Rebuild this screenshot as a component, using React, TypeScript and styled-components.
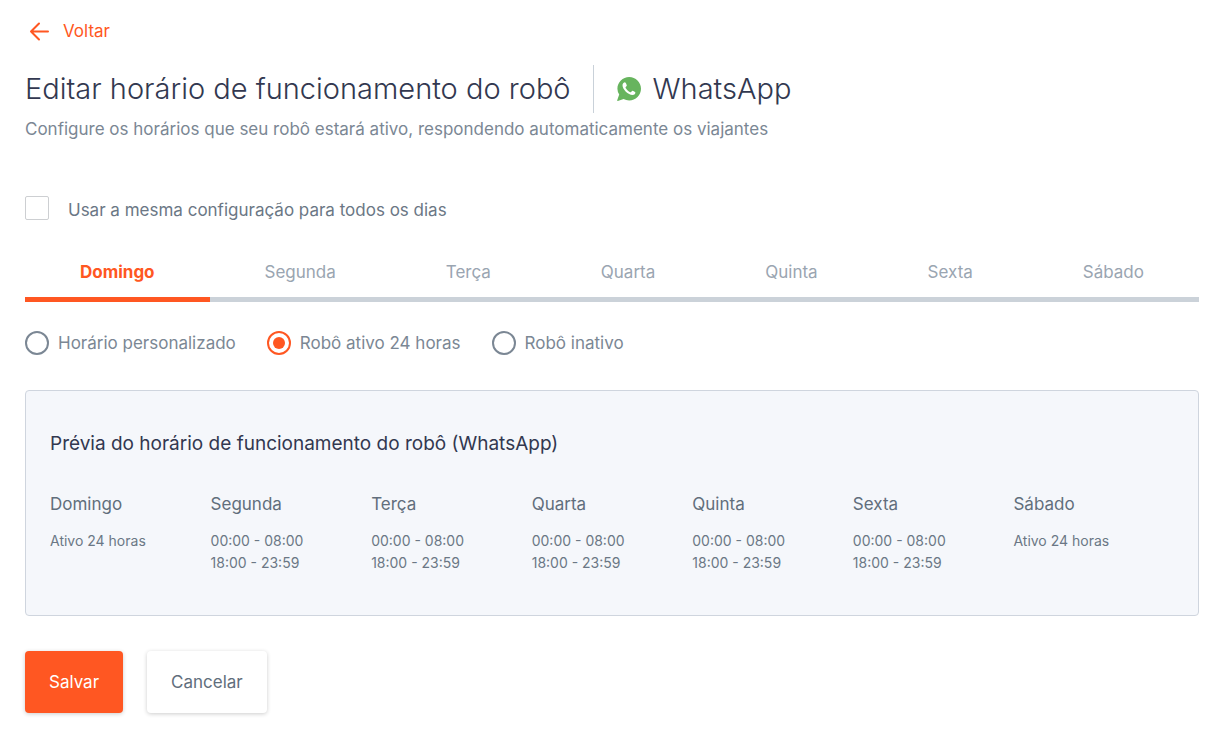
import React, { useState } from 'react';
import styled, { createGlobalStyle } from 'styled-components';

const GlobalStyle = createGlobalStyle`
  *, *::before, *::after { box-sizing: border-box; }
  body {
    margin: 0;
    background: #fff;
    color: #7b8794;
    font-family: Inter, "Liberation Sans", sans-serif;
    font-size: 17px;
    line-height: 24px;
  }
  h1, h2, h3, p, ul, fieldset { margin: 0; padding: 0; border: 0; font-weight: 400; }
  button, input { font: inherit; margin: 0; }
`;

const Page = styled.main`
  padding: 19px 23px 21px 25px;
`;

const BackLink = styled.a`
  display: inline-flex;
  align-items: center;
  gap: 11px;
  padding-left: 2px;
  color: #ff5722;
  text-decoration: none;
`;

const Header = styled.header`
  display: flex;
  flex-direction: column;
  gap: 4px;
  margin-top: 16px;
`;

const TitleRow = styled.div`
  display: flex;
  align-items: center;
  height: 48px;
  color: #323850;
  font-size: 29px;
  font-weight: 300;
  line-height: 48px;
`;

const Title = styled.h1`
  font-size: 29px;
  font-weight: 300;
  padding-right: 22px;
`;

const Channel = styled.div`
  display: flex;
  align-items: center;
  align-self: stretch;
  gap: 12px;
  padding-left: 23px;
  border-left: 1px solid #c9d1d9;
`;

const CheckLabel = styled.label`
  display: flex;
  align-items: flex-end;
  gap: 19px;
  margin-top: 55px;
  color: #6b7785;
  line-height: 20px;
`;

const Checkbox = styled.input`
  appearance: none;
  width: 24px;
  height: 24px;
  border: 1px solid #cdcfd2;
  border-radius: 2px;
  background: #fff;

  &:checked { background: #ff5722; }
`;

const TabList = styled.div`
  display: flex;
  margin-top: 28px;
`;

const Tab = styled.button<{ $active: boolean }>`
  flex: 1 1 auto;
  padding: 12px 0 13px;
  border: 0;
  border-bottom: 5px solid ${(p) => (p.$active ? '#ff5722' : '#cbd2d9')};
  background: none;
  color: ${(p) => (p.$active ? '#ff5722' : '#9aa5b1')};
  font-weight: ${(p) => (p.$active ? 700 : 400)};
`;

const RadioGroup = styled.fieldset`
  display: flex;
  gap: 31px;
  margin-top: 29px;
`;

const RadioLabel = styled.label`
  display: flex;
  align-items: center;
  gap: 9px;
`;

const Radio = styled.input`
  appearance: none;
  display: grid;
  place-items: center;
  width: 24px;
  height: 24px;
  border: 2px solid #7b8794;
  border-radius: 50%;

  &:checked { border-color: #ff5722; }
  &:checked::before {
    content: "";
    width: 12px;
    height: 12px;
    border-radius: 50%;
    background: #ff5722;
  }
`;

const Preview = styled.section`
  margin-top: 35px;
  padding: 41px 24px;
  border: 1px solid #cfd5de;
  border-radius: 4px;
  background: #f5f7fb;
`;

const PreviewTitle = styled.h2`
  color: #323850;
  font-size: 19px;
  line-height: 24px;
`;

const Days = styled.div`
  display: grid;
  grid-template-columns: repeat(7, 1fr);
  margin-top: 36px;
`;

const DayName = styled.h3`
  color: #616e7c;
  font-size: 17px;
`;

const Hours = styled.p`
  margin-top: 14px;
  color: #6b7785;
  font-size: 14px;
  line-height: 22px;
  white-space: pre-line;
`;

const Actions = styled.div`
  display: flex;
  gap: 24px;
  margin-top: 35px;
`;

const Button = styled.button<{ $primary?: boolean }>`
  padding: 19px 24px;
  border: 0;
  border-radius: 4px;
  background: ${(p) => (p.$primary ? '#ff5722' : '#fff')};
  color: ${(p) => (p.$primary ? '#fff' : '#616e7c')};
  box-shadow: 0 1px 4px rgba(0, 0, 0, 0.2);
`;

const split = '00:00 - 08:00\n18:00 - 23:59';
const schedule = [
  { day: 'Domingo', hours: 'Ativo 24 horas' },
  { day: 'Segunda', hours: split },
  { day: 'Terça', hours: split },
  { day: 'Quarta', hours: split },
  { day: 'Quinta', hours: split },
  { day: 'Sexta', hours: split },
  { day: 'Sábado', hours: 'Ativo 24 horas' },
];
const modes = ['Horário personalizado', 'Robô ativo 24 horas', 'Robô inativo'];

const WhatsAppIcon = () => (
  <svg width="24" height="24" viewBox="0 0 24 24" aria-hidden="true">
    <path
      fill="#67b45e"
      d="M12.2 0C18.7 0 24 5.2 24 11.7s-5.3 11.7-11.8 11.7c-2 0-3.900-.5-5.600-1.400L.8 23.900c-.4.100-.7-.200-.6-.6l2-5.700A11.600 11.600 0 0 1 .4 11.700C.4 5.200 5.700 0 12.200 0Z"
    />
    <path
      fill="#fff"
      d="M8.300 5.400C7.500 5 5.600 6.300 5.500 8.100c-.1 4.400 5.700 10 10.100 10 1.800-.1 3-1.600 2.800-2.600-.1-.6-2.200-1.600-2.800-1.700-.7-.1-1.300 1.300-1.900 1.400-1.400-.1-4.800-3.300-5.200-4.800 0-.7 1.400-1.300 1.300-2-.1-.7-1-2.800-1.500-3Z"
    />
  </svg>
);

export default function App() {
  const [day, setDay] = useState('Domingo');
  const [mode, setMode] = useState(modes[1]);

  return (
    <Page>
      <GlobalStyle />
      <BackLink href="#voltar">
        <svg width="25" height="24" viewBox="0 0 25 24" fill="none" stroke="currentColor" strokeWidth="2" strokeLinecap="round" strokeLinejoin="round" aria-hidden="true">
          <path d="M21 12.5H4M12 4.5l-8 8 8 8" />
        </svg>
        Voltar
      </BackLink>
      <Header>
        <TitleRow>
          <Title>Editar horário de funcionamento do robô</Title>
          <Channel>
            <WhatsAppIcon />
            WhatsApp
          </Channel>
        </TitleRow>
        <p>Configure os horários que seu robô estará ativo, respondendo automaticamente os viajantes</p>
      </Header>
      <CheckLabel>
        <Checkbox type="checkbox" />
        Usar a mesma configuração para todos os dias
      </CheckLabel>
      <TabList role="tablist">
        {schedule.map((s) => (
          <Tab key={s.day} type="button" role="tab" aria-selected={s.day === day} $active={s.day === day} onClick={() => setDay(s.day)}>
            {s.day}
          </Tab>
        ))}
      </TabList>
      <RadioGroup aria-label="Funcionamento">
        {modes.map((m) => (
          <RadioLabel key={m}>
            <Radio type="radio" name="mode" checked={m === mode} onChange={() => setMode(m)} />
            {m}
          </RadioLabel>
        ))}
      </RadioGroup>
      <Preview>
        <PreviewTitle>Prévia do horário de funcionamento do robô (WhatsApp)</PreviewTitle>
        <Days>
          {schedule.map((s) => (
            <div key={s.day}>
              <DayName>{s.day}</DayName>
              <Hours>{s.hours}</Hours>
            </div>
          ))}
        </Days>
      </Preview>
      <Actions>
        <Button type="button" $primary>Salvar</Button>
        <Button type="button">Cancelar</Button>
      </Actions>
    </Page>
  );
}
